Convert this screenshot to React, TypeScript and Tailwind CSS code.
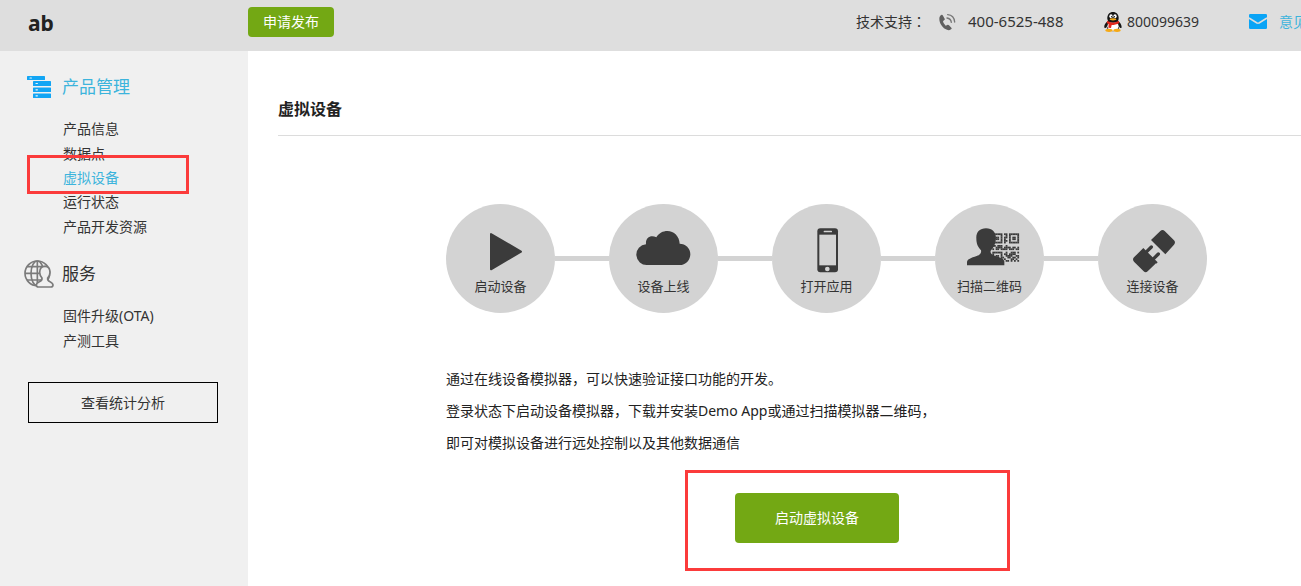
import type { ReactNode } from "react";

const productLinks = ["产品信息", "数据点", "虚拟设备", "运行状态", "产品开发资源"];
const serviceLinks = ["固件升级(OTA)", "产测工具"];

function ProductIcon() {
  return (
    <svg className="h-[22px] w-6 shrink-0" viewBox="0 0 24 22" aria-hidden="true">
      <g fill="#12a5f4">
        <rect x="0" y="0" width="18" height="4" rx="0.6" />
        <rect x="6" y="5" width="18" height="5" rx="0.6" />
        <rect x="6" y="11.5" width="18" height="4.5" rx="0.6" />
        <rect x="6" y="17.5" width="18" height="4.5" rx="0.6" />
      </g>
      <g stroke="#e6f3fb" strokeWidth="1.2" strokeLinecap="round">
        <path d="M3 2h1.4M9 7.5h1.4M9 13.8h1.4M9 19.8h1.4" />
      </g>
    </svg>
  );
}

function ServiceIcon() {
  return (
    <svg className="h-7 w-[30px] shrink-0" viewBox="71 60 90 84" fill="none" stroke="#7b7b7b" strokeWidth="5" aria-hidden="true">
      <circle cx="111" cy="100" r="37" />
      <ellipse cx="111" cy="100" rx="19" ry="37" />
      <path d="M111 63v74M74 100h74M80 80h62M80 120h62" />
      <path
        d="M134 79c-11 0-16 8-16 18 0 8 3 13 7 17 1 7-3 9-8 11-6 3-9 5-9 10 0 4 2 6 6 6h38c4 0 6-2 6-6 0-5-3-7-9-10-6-2-8-4-7-11 4-4 7-9 7-17 0-10-5-18-15-18z"
        fill="#f0f0f0"
      />
    </svg>
  );
}

function CallIcon() {
  return (
    <svg className="h-[18px] w-[17px] shrink-0" viewBox="297 37 51 54" aria-hidden="true">
      <path
        d="M304 43c2-1 4 0 5 2l5 9c1 2 0 4-2 5l-3 3c1 5 4 9 8 13l5-2c2-1 4 0 5 1l7 7c2 2 1 4-1 5-5 4-11 3-17-1-11-7-18-19-18-31 0-5 2-9 6-11z"
        fill="#606060"
      />
      <g fill="none" stroke="#777" strokeWidth="4" strokeLinecap="round">
        <path d="M323 42c12 1 20 9 21 22M321 52c7 1 12 5 13 13" />
      </g>
    </svg>
  );
}

function PenguinIcon() {
  return (
    <svg className="h-5 w-[18px] shrink-0" viewBox="0 0 54 60" aria-hidden="true">
      <path d="M13 26C4 31-2 42 2 48c3 1 6-4 8-7l34 0c2 3 5 8 8 7 3-6-2-17-11-22z" fill="#151515" />
      <ellipse cx="27" cy="40" rx="20" ry="18" fill="#151515" />
      <ellipse cx="27" cy="43" rx="17" ry="14" fill="#fff" />
      <path d="M10 20C9 8 17 0 27 0s18 8 17 20c-1 9-8 12-17 12S11 29 10 20z" fill="#151515" />
      <ellipse cx="21" cy="13" rx="5" ry="6" fill="#fff" />
      <ellipse cx="33" cy="13" rx="5" ry="6" fill="#fff" />
      <circle cx="23" cy="14" r="2.2" fill="#111" />
      <circle cx="31" cy="14" r="2.2" fill="#111" />
      <ellipse cx="27" cy="22" rx="10" ry="3.4" fill="#f5a915" />
      <path d="M10 26c10 7 24 7 34 0l2 7c-8 5-15 6-23 6l-2 9-8-1 1-10-6-4z" fill="#e3281d" />
      <ellipse cx="15" cy="55" rx="11" ry="5" fill="#f5a915" />
      <ellipse cx="39" cy="55" rx="11" ry="5" fill="#f5a915" />
    </svg>
  );
}

function MailIcon() {
  return (
    <svg className="h-[15px] w-[18px] shrink-0" viewBox="0 0 54 45" aria-hidden="true">
      <rect width="54" height="45" rx="4" fill="#0aa4f6" />
      <path d="M0 12l24 15q3 2 6 0l24-15" fill="none" stroke="#dedede" strokeWidth="4.5" />
    </svg>
  );
}

function StepIcon({ viewBox, children }: { viewBox: string; children: ReactNode }) {
  return (
    <svg className="h-[70px] w-full" viewBox={viewBox} fill="#3b3b3b" aria-hidden="true">
      {children}
    </svg>
  );
}

// Modules of the two-dimensional code, one string per row.
const codeRows = [
  "######.##.######",
  "#....#..#.#....#",
  "#.##.#.##.#.##.#",
  "#.##.#.#..#.##.#",
  "#....#.##.#....#",
  "######.#..######",
  "................",
  "##.###..#.......",
  "..####.####.##.#",
  "#.##.####.###.##",
  "................",
  "######..#..###.#",
  "#....#.##.####..",
  "#.##.#..####..##",
  "#.##.##..##.##.#",
  "#....#.#...##.#.",
  "######..##.#.#.#",
];

const steps = [
  {
    label: "启动设备",
    icon: (
      <StepIcon viewBox="48 41 327 210">
        <path d="M183 131v106l90-53z" stroke="#3b3b3b" strokeWidth="6" strokeLinejoin="round" />
      </StepIcon>
    ),
  },
  {
    label: "设备上线",
    icon: (
      <StepIcon viewBox="537 41 327 210">
        <path d="M652 224a31 31 0 0 1-4-62c-2-20 14-29 31-21 8-13 20-19 33-19 20 0 36 16 37 38a32 32 0 0 1 0 64z" />
      </StepIcon>
    ),
  },
  {
    label: "打开应用",
    icon: (
      <StepIcon viewBox="66 41 327 210">
        <rect x="202" y="114" width="62" height="132" rx="9" />
        <g fill="#d3d3d3">
          <rect x="208" y="133" width="50" height="92" />
          <rect x="221" y="121" width="25" height="5" rx="2" />
          <circle cx="232" cy="236" r="7" />
        </g>
      </StepIcon>
    ),
  },
  {
    label: "扫描二维码",
    icon: (
      <StepIcon viewBox="555 41 327 210">
        {codeRows.map((row, y) =>
          row.split("").map((cell, x) =>
            cell === "#" ? (
              <rect key={`${x}-${y}`} x={727 + x * 5} y={129 + y * 5} width="5.3" height="5.3" />
            ) : null,
          ),
        )}
        <path d="M708 114c-19 0-30 12-29 30 0 17 5 26 14 36 2 10-4 14-13 17-17 6-28 9-29 18v10h112v-12c-1-9-12-11-29-17-9-3-14-6-12-15 9-9 15-20 16-37 0-18-11-30-30-30z" />
      </StepIcon>
    ),
  },
  {
    label: "连接设备",
    icon: (
      <StepIcon viewBox="204 41 327 210">
        <path d="M391 122c4-4 9-4 13 0l28 28c4 4 4 9 0 13l-26 29-43-43z" />
        <path d="M340 173l43 43-4 4-1-1-25 24c-4 4-8 4-12 0l-29-29c-4-4-4-9 0-13l25-25z" />
        <path d="M350 184l14-14M371 205l14-14" stroke="#3b3b3b" strokeWidth="10" strokeLinecap="round" />
      </StepIcon>
    ),
  },
];

function LinkList({ items, active, className }: { items: string[]; active?: string; className: string }) {
  return (
    <ul className={`grid auto-rows-fr pl-[63px] text-sm ${className}`}>
      {items.map((item) => (
        <li key={item} className="relative flex items-center">
          <a href="#" className={item === active ? "text-[#3cb4dc]" : "text-[#333]"}>
            {item}
          </a>
          {item === active && (
            <span className="pointer-events-none absolute -left-9 -top-[11px] h-[39px] w-[162px] border-3 border-[#fb3b3b]" />
          )}
        </li>
      ))}
    </ul>
  );
}

export default function App() {
  return (
    <div className="flex min-h-screen flex-col overflow-hidden bg-white font-['Noto_Sans','Noto_Sans_CJK_SC',sans-serif] text-sm text-[#222]">
      <header className="flex h-[51px] items-start bg-[#dedede] whitespace-nowrap">
        <h1 className="w-[248px] shrink-0 pl-7 pt-2 text-[21px] leading-[30px] font-bold">ab</h1>
        <button type="button" className="mt-[7px] h-[30px] w-[86px] shrink-0 rounded-[4px] bg-[#73a814] text-white">
          申请发布
        </button>
        <div className="-mr-[34px] ml-auto flex h-[43px] items-center text-[#333]">
          <span className="w-[83px]">
            技术支持<span className="font-['Noto_Sans_CJK_TC']">：</span>
          </span>
          <CallIcon />
          <span className="ml-3 w-[136px] text-[15px]">400-6525-488</span>
          <PenguinIcon />
          <span className="ml-[5px] w-[122px]">800099639</span>
          <MailIcon />
          <a href="#" className="ml-3 text-[#3cb4dc]">
            意见反馈
          </a>
        </div>
      </header>

      <div className="flex flex-1">
        <aside className="w-[248px] shrink-0 bg-[#f0f0f0] pt-[22px]">
          <nav>
            <h2 className="flex h-7 items-center gap-[11px] pl-[27px] text-[17px] text-[#3cb4dc]">
              <ProductIcon />
              产品管理
            </h2>
            <LinkList items={productLinks} active="虚拟设备" className="mt-4 h-[122px]" />
            <h2 className="mt-[21px] flex h-7 items-center gap-2 pl-6 text-[17px] text-[#333]">
              <ServiceIcon />
              服务
            </h2>
            <LinkList items={serviceLinks} className="mt-4 h-[49px]" />
          </nav>
          <button type="button" className="mt-[29px] ml-7 block h-[41px] w-[190px] border border-black text-[#333]">
            查看统计分析
          </button>
        </aside>

        <main className="min-w-0 flex-1 pl-[30px]">
          <h2 className="border-b border-[#dcdcdc] pt-11 pb-[11px] text-base leading-[29px] font-bold">虚拟设备</h2>
          <div className="pt-[68px] pl-[168px]">
            <ol className="flex">
              {steps.map((step, index) => (
                <li key={step.label} className="flex shrink-0 items-center">
                  {index > 0 && <span className="h-[5px] w-[54px] bg-[#d3d3d3]" />}
                  <div className="flex size-[109px] flex-col items-center rounded-full bg-[#d3d3d3]">
                    {step.icon}
                    <span className="text-[13px] leading-6 text-[#333]">{step.label}</span>
                  </div>
                </li>
              ))}
            </ol>
            <div className="mt-[50px] leading-8">
              <p>通过在线设备模拟器，可以快速验证接口功能的开发。</p>
              <p>登录状态下启动设备模拟器，下载并安装Demo App或通过扫描模拟器二维码，</p>
              <p>即可对模拟设备进行远处控制以及其他数据通信</p>
            </div>
            <div className="relative mt-[34px] ml-[289px] w-[164px]">
              <button type="button" className="block h-[50px] w-full rounded-[4px] bg-[#73a814] text-white">
                启动虚拟设备
              </button>
              <span className="pointer-events-none absolute -top-[23px] -left-[50px] h-[101px] w-[325px] border-3 border-[#fb3b3b]" />
            </div>
          </div>
        </main>
      </div>
    </div>
  );
}
